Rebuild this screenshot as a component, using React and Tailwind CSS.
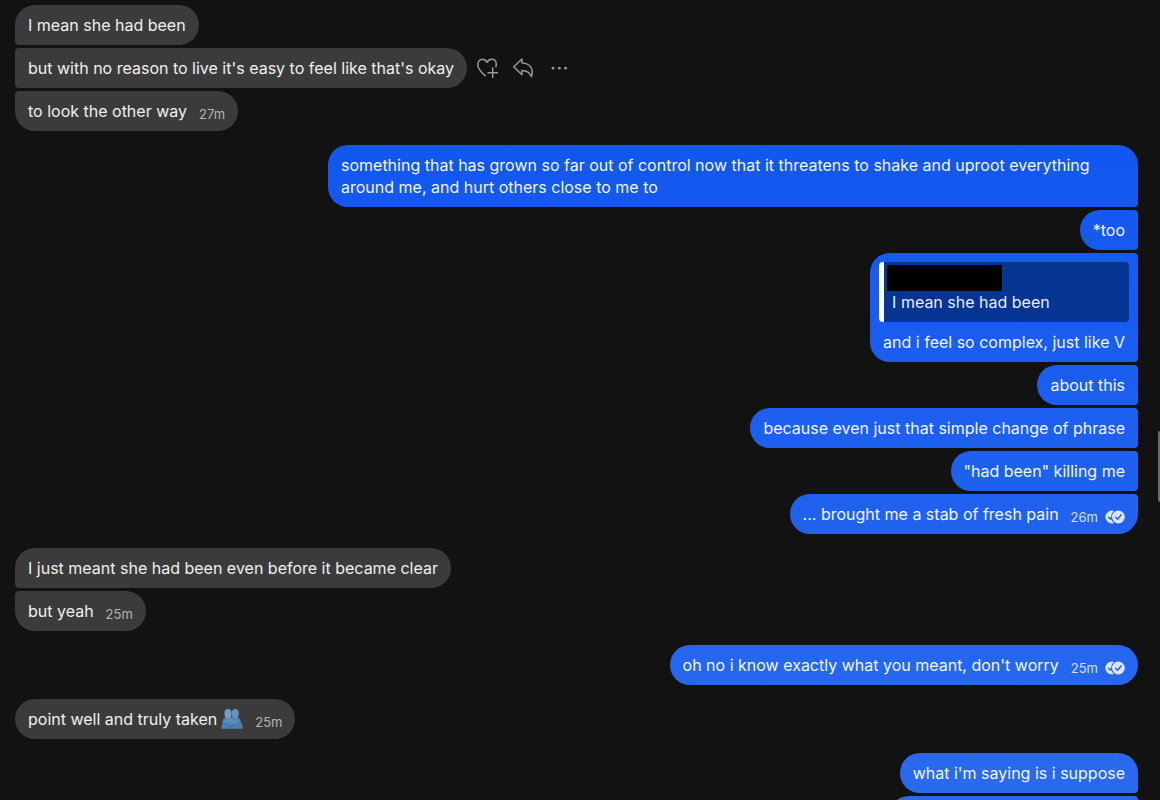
import React from 'react';
import clsx from 'clsx';

const THREAD = [
  {
    from: 'them',
    messages: [
      { text: 'I mean she had been' },
      { text: "but with no reason to live it's easy to feel like that's okay", actions: true },
      { text: 'to look the other way', time: '27m' },
    ],
  },
  {
    from: 'me',
    messages: [
      {
        text: 'something that has grown so far out of control now that it threatens to shake and uproot everything around me, and hurt others close to me to',
      },
      { text: '*too' },
      { text: 'and i feel so complex, just like V', quote: 'I mean she had been' },
      { text: 'about this' },
      { text: 'because even just that simple change of phrase' },
      { text: '"had been" killing me' },
      { text: '... brought me a stab of fresh pain', time: '26m' },
    ],
  },
  {
    from: 'them',
    messages: [
      { text: 'I just meant she had been even before it became clear' },
      { text: 'but yeah', time: '25m' },
    ],
  },
  {
    from: 'me',
    messages: [{ text: "oh no i know exactly what you meant, don't worry", time: '25m' }],
  },
  {
    from: 'them',
    messages: [{ text: 'point well and truly taken', hug: true, time: '25m' }],
  },
  {
    from: 'me',
    messages: [{ text: "what i'm saying is i suppose" }, { text: '' }],
  },
];

function HeartPlusIcon() {
  return (
    <svg width="24" height="24" viewBox="0 0 24 24" fill="none" stroke="currentColor" strokeWidth="1.5" strokeLinecap="round" strokeLinejoin="round" aria-hidden="true">
      <path d="M10.4 19.8C5.6 15.8 2.8 12.2 2.8 8.4 2.8 5.2 4.9 3.3 7.4 3.3c2 0 3.6 1.1 4.6 3 1-1.900 2.6-3 4.6-3 2.6 0 4.7 1.900 4.7 5.100 0 .8-.1 1.500-.4 2.300" />
      <path d="M13 16.7h9.4M17.7 12v9.4" />
    </svg>
  );
}

function ReplyIcon() {
  return (
    <svg width="24" height="24" viewBox="0 0 24 24" fill="none" stroke="currentColor" strokeWidth="1.5" strokeLinejoin="round" aria-hidden="true">
      <path d="M2.700 10.700 10.900 3v3.700c6.200.4 10.300 4 10.300 9.400 0 1.800-.3 3.200-.9 4.500-1.500-4-4.500-5.900-9.400-6v4.100z" />
    </svg>
  );
}

function MoreIcon() {
  return (
    <svg width="24" height="24" viewBox="0 0 24 24" fill="currentColor" aria-hidden="true">
      <circle cx="6" cy="12.2" r="1.4" />
      <circle cx="12.3" cy="12.2" r="1.4" />
      <circle cx="18.6" cy="12.2" r="1.4" />
    </svg>
  );
}

function ReadIcon() {
  return (
    <svg width="20" height="14" viewBox="0 0 20 14" role="img" aria-label="Read">
      <circle cx="6.8" cy="7" r="6.4" fill="#d9e4fd" />
      <path d="m3.600 7.300 2 2 3.600-4.600" fill="none" stroke="#2161ee" strokeWidth="1.400" strokeLinecap="round" strokeLinejoin="round" />
      <circle cx="13.4" cy="7" r="7.3" fill="#2161ee" />
      <circle cx="13.4" cy="7" r="6.4" fill="#d9e4fd" />
      <path d="m10.600 7.300 2 2 3.600-4.600" fill="none" stroke="#2161ee" strokeWidth="1.400" strokeLinecap="round" strokeLinejoin="round" />
    </svg>
  );
}

function HugIcon() {
  return (
    <svg width="22" height="22" viewBox="0 0 22 22" role="img" aria-label="People hugging" className="ml-1 shrink-0">
      <path fill="#4d80ad" d="M.4 20.800c-.4-1.800.2-3.300 1-4.300-.3-4 1-7 4.300-7.400h9.800c3.200.4 4.200 2.800 4.400 5.200 1.500 1.500 2 4 1.700 6.500z" />
      <path fill="#6f9dc6" d="M3.400 5.400C3.300 2.700 4.600 1.100 7 1.100s3.700 1.600 3.700 4.300c0 3-1.500 5-3.700 5s-3.600-2-3.600-5z" />
      <path fill="#6493be" d="M10.700 5.400c0-2.700 1.300-4.300 3.600-4.300 2.400 0 3.700 1.600 3.600 4.300 0 3-1.500 5-3.600 5s-3.600-2-3.600-5z" />
      <path fill="#5c8eba" d="M1.800 13.200c2.600-2.200 5.600-2.600 9-1.900 3.400-.5 6.600 0 8.600 2.700-2.600 2.400-5.600 3.200-9 3-4.200.1-7.300-.8-8.600-3.800z" />
      <path fill="none" stroke="#3b6c99" strokeWidth=".7" strokeLinecap="round" d="M2.200 14.800c3 1.700 5.600 1.300 8.600 1.600 3.300.1 6-.6 8.400-2.200M6 19c2.200-.8 4.400-.5 6.600-.6" />
    </svg>
  );
}

function Quote({ text }) {
  return (
    <blockquote className="-mx-1 mb-[9px] flex overflow-hidden rounded bg-[#063493]">
      <div className="w-[5px] shrink-0 bg-white" />
      <div className="pt-[3px] pr-2 pb-[9px] pl-[3px]">
        <div className="h-[26px] w-[115px] bg-black" />
        <p className="pl-[5px] text-[#e6ebf5]">{text}</p>
      </div>
    </blockquote>
  );
}

function MessageActions() {
  const btn = 'rounded-full hover:text-white';
  return (
    <div className="ml-2 flex items-center gap-3 text-[#999999]">
      <button type="button" aria-label="React" className={btn}><HeartPlusIcon /></button>
      <button type="button" aria-label="Reply" className={btn}><ReplyIcon /></button>
      <button type="button" aria-label="More" className={btn}><MoreIcon /></button>
    </div>
  );
}

function Message({ message, mine, first, last }) {
  const { text, time, quote, hug, actions } = message;
  return (
    <div className={clsx('flex items-center', mine && 'justify-end')}>
      <div
        className={clsx(
          'max-w-[810px] rounded-[20px] px-[13px] py-[9px]',
          mine ? 'bg-linear-to-b from-[#0b52f0] to-[#2a6aee] bg-fixed text-[#f2f6ff]' : 'bg-[#3b3b3b] text-[#f0f0f0]',
          mine && !first && 'rounded-tr',
          mine && !last && 'rounded-br',
          !mine && !first && 'rounded-tl',
          !mine && !last && 'rounded-bl',
          !text && 'h-10 w-[249px]',
        )}
      >
        {quote && <Quote text={quote} />}
        <div className="flex items-end">
          <p>{text}</p>
          {hug && <HugIcon />}
          {time && (
            <span className={clsx('ml-3 flex h-4 items-center gap-[7px] text-[13px]', mine ? 'text-[#d3e0fd]' : 'text-[#b5b5b5]')}>
              <time>{time}</time>
              {mine && <ReadIcon />}
            </span>
          )}
        </div>
      </div>
      {actions && <MessageActions />}
    </div>
  );
}

export default function App() {
  return (
    <main className="relative h-screen overflow-hidden bg-[#121212] font-['Inter',sans-serif] text-[16px] leading-[22px] antialiased">
      <div className="flex flex-col gap-[14px] pt-[5px] pr-[22px] pl-[15px]">
        {THREAD.map((group, i) => (
          <section key={i} className="flex flex-col gap-[3px]">
            {group.messages.map((m, j) => (
              <Message
                key={j}
                message={m}
                mine={group.from === 'me'}
                first={j === 0}
                last={j === group.messages.length - 1}
              />
            ))}
          </section>
        ))}
      </div>
      {/* scrollbar thumb */}
      <div className="absolute top-[431px] right-0 h-[71px] w-[2px] rounded-l-sm bg-[#6b6b6b]" />
    </main>
  );
}
